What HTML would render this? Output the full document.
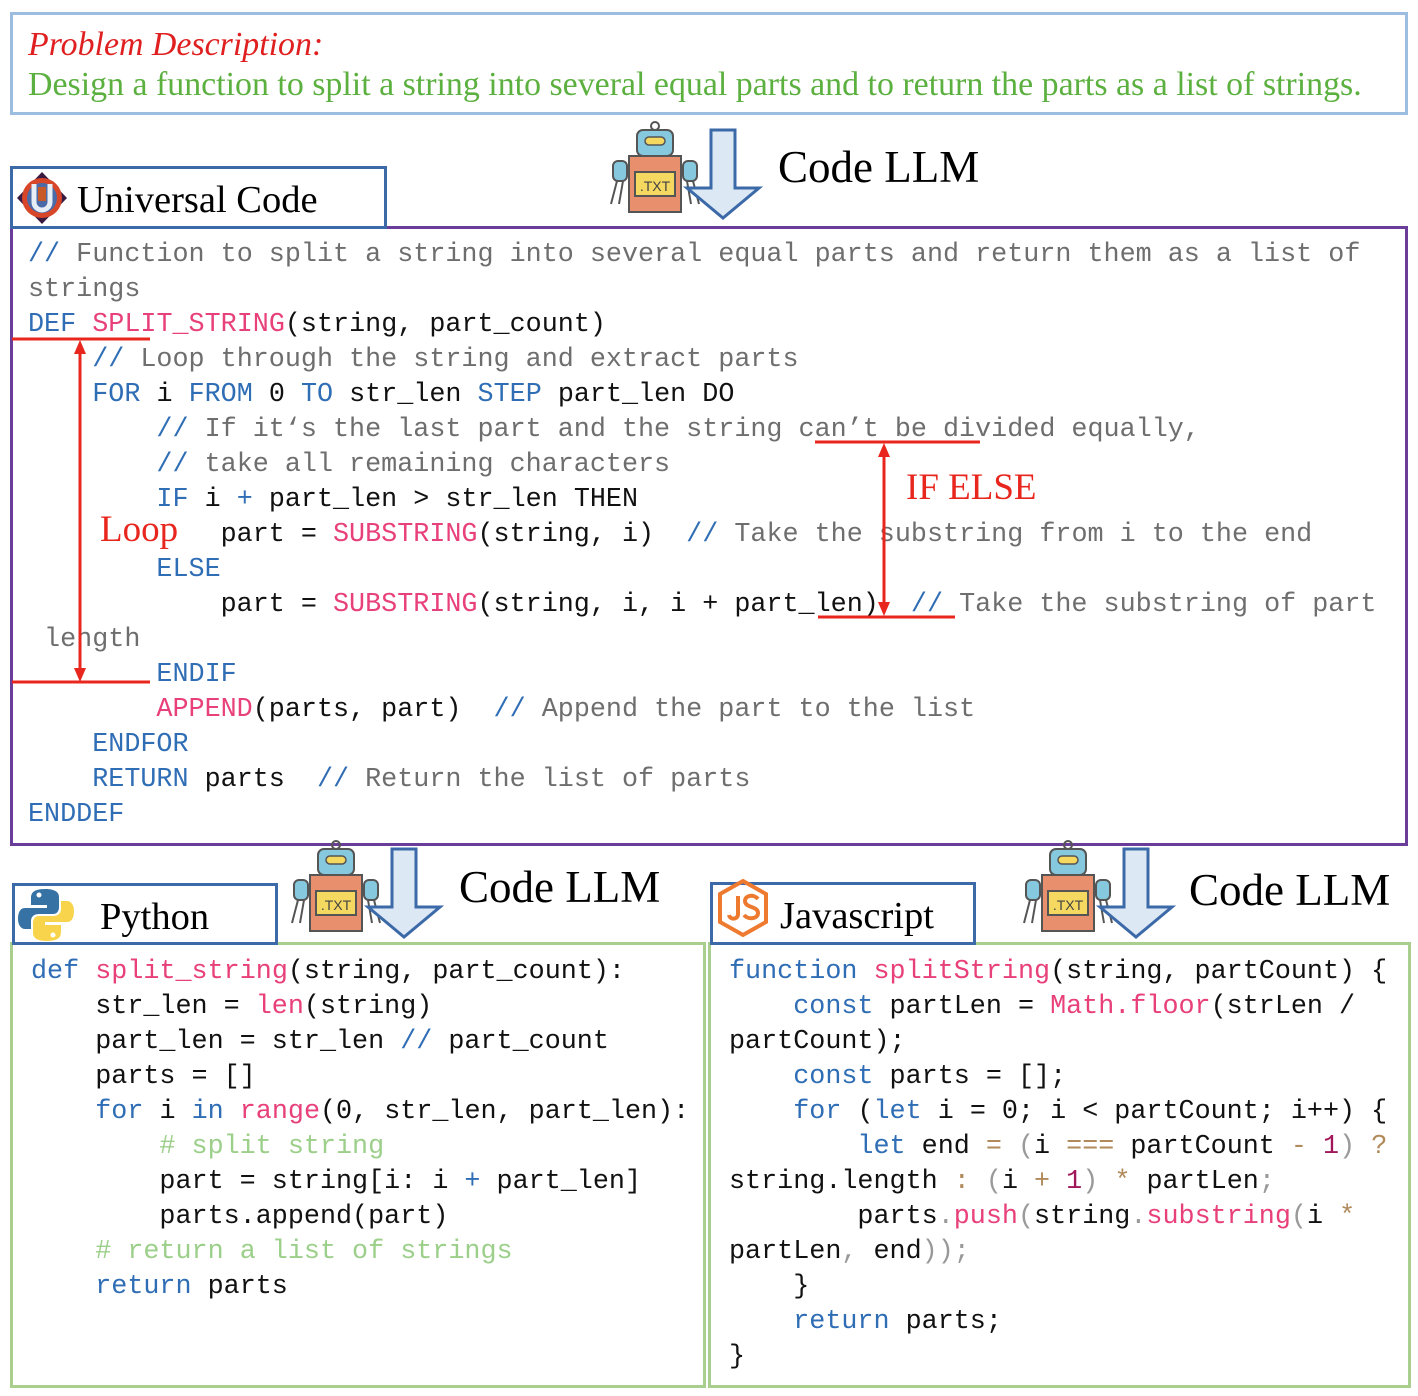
<!DOCTYPE html>
<html><head><meta charset="utf-8"><style>
body{margin:0;width:1418px;height:1396px;background:#fff;position:relative;overflow:hidden;font-family:"Liberation Serif",serif}
.a{position:absolute;box-sizing:border-box}
pre{position:absolute;margin:0;font-family:"Liberation Mono",monospace;font-size:26.75px;line-height:35px;color:#111}
.k{color:#2f6db5}.f{color:#e8407a}.c{color:#6e6e6e}.g{color:#9ccf8a}.n{color:#a0185a}.o{color:#b08a5a}.p{color:#999}
.t{position:absolute;white-space:nowrap}
</style></head><body>
<div class="a" style="left:10px;top:12px;width:1398px;height:103px;border:3px solid #9dbde0"></div>
<div class="t" style="left:28px;top:26px;font-size:33.9px;color:#e02020;font-style:italic">Problem Description:</div>
<div class="t" style="left:28px;top:66px;font-size:33.9px;color:#5cb040">Design a function to split a string into several equal parts and to return the parts as a list of strings.</div>

<div class="a" style="left:10px;top:226px;width:1398px;height:620px;border:3px solid #6a3d9a"></div>
<div class="a" style="left:10px;top:166px;width:377px;height:63px;border:3px solid #3c6aa8;background:#fff"></div>
<svg class="a" style="left:16px;top:171px" width="52" height="54" viewBox="0 0 52 54"><polygon points="26,1 51,27 26,53 1,27" fill="#3a1a40"/><circle cx="26" cy="27" r="20" fill="#d8462a"/><circle cx="26" cy="27" r="15" fill="#4a6aa8"/><path d="M18,13 V31 A8,8 0 0 0 34,31 V13" fill="none" stroke="#e8eef5" stroke-width="5"/><rect x="22" y="16" width="8" height="14" fill="#c85a2a"/></svg>
<div class="t" style="left:77px;top:178px;font-size:38.5px">Universal Code</div>

<pre style="left:28px;top:238px"><span class="k">//</span><span class="c"> Function to split a string into several equal parts and return them as a list of
strings</span>
<span class="k">DEF</span> <span class="f">SPLIT_STRING</span>(string, part_count)
    <span class="k">//</span><span class="c"> Loop through the string and extract parts</span>
    <span class="k">FOR</span> i <span class="k">FROM</span> 0 <span class="k">TO</span> str_len <span class="k">STEP</span> part_len DO
        <span class="k">//</span><span class="c"> If it‘s the last part and the string can’t be divided equally,</span>
        <span class="k">//</span><span class="c"> take all remaining characters</span>
        <span class="k">IF</span> i <span class="k">+</span> part_len &gt; str_len THEN
            part = <span class="f">SUBSTRING</span>(string, i)  <span class="k">//</span><span class="c"> Take the substring from i to the end</span>
        <span class="k">ELSE</span>
            part = <span class="f">SUBSTRING</span>(string, i, i + part_len)  <span class="k">//</span><span class="c"> Take the substring of part
 length</span>
        <span class="k">ENDIF</span>
        <span class="f">APPEND</span>(parts, part)  <span class="k">//</span><span class="c"> Append the part to the list</span>
    <span class="k">ENDFOR</span>
    <span class="k">RETURN</span> parts  <span class="k">//</span><span class="c"> Return the list of parts</span>
<span class="k">ENDDEF</span></pre>

<svg class="a" style="left:0;top:0" width="1418" height="1396">
<g stroke="#e8261e" stroke-width="3" fill="#e8261e">
<line x1="12" y1="339" x2="150" y2="339"/><line x1="12" y1="682" x2="150" y2="682"/>
<line x1="80" y1="350" x2="80" y2="672"/><polygon points="80,340 74,354 86,354" stroke="none"/><polygon points="80,682 74,668 86,668" stroke="none"/>
<line x1="815" y1="442" x2="980" y2="442"/><line x1="818" y1="617" x2="955" y2="617"/>
<line x1="884" y1="452" x2="884" y2="607"/><polygon points="884,443 878,457 890,457" stroke="none"/><polygon points="884,616 878,602 890,602" stroke="none"/>
</g></svg>
<div class="t" style="left:100px;top:508px;font-size:37px;color:#e8261e">Loop</div>
<div class="t" style="left:906px;top:466px;font-size:37px;color:#e8261e">IF ELSE</div>

<svg class="a" style="left:605px;top:116px" width="160" height="104" viewBox="0 0 160 104"><g id="r"><circle cx="50" cy="10" r="4" fill="none" stroke="#555" stroke-width="2"/><rect x="32" y="14" width="36" height="26" rx="6" fill="#86c8de" stroke="#555" stroke-width="2"/><rect x="40" y="21" width="20" height="8" rx="4" fill="#f5d860" stroke="#555" stroke-width="1.5"/><rect x="8" y="45" width="14" height="20" rx="5" fill="#86c8de" stroke="#555" stroke-width="2"/><rect x="78" y="45" width="14" height="20" rx="5" fill="#86c8de" stroke="#555" stroke-width="2"/><path d="M12 65 L6 88 M18 65 L14 88 M82 65 L86 88 M88 65 L94 88" stroke="#555" stroke-width="2"/><rect x="24" y="40" width="52" height="56" fill="#e8906e" stroke="#555" stroke-width="2"/><rect x="30" y="56" width="40" height="24" fill="#f5d860" stroke="#555" stroke-width="2"/><text x="50" y="75" font-family="Liberation Sans" font-size="14" text-anchor="middle" fill="#444">.TXT</text></g><polygon points="106,14 130,14 130,72 154,72 118,102 82,72 106,72" fill="#dde8f5" stroke="#3c6aa8" stroke-width="3"/></svg>
<div class="t" style="left:778px;top:141px;font-size:45px">Code LLM</div>

<svg class="a" style="left:286px;top:834px" width="160" height="106" viewBox="0 0 160 104"><use href="#r"/><polygon points="106,14 130,14 130,72 154,72 118,102 82,72 106,72" fill="#dde8f5" stroke="#3c6aa8" stroke-width="3"/></svg>
<svg class="a" style="left:1018px;top:834px" width="160" height="106" viewBox="0 0 160 104"><use href="#r"/><polygon points="106,14 130,14 130,72 154,72 118,102 82,72 106,72" fill="#dde8f5" stroke="#3c6aa8" stroke-width="3"/></svg>
<div class="t" style="left:459px;top:861px;font-size:45px">Code LLM</div>
<div class="t" style="left:1189px;top:864px;font-size:45px">Code LLM</div>

<div class="a" style="left:10px;top:942px;width:696px;height:446px;border:3px solid #a9cf8e"></div>
<div class="a" style="left:12px;top:883px;width:266px;height:62px;border:3px solid #3c6aa8;background:#fff"></div>
<svg class="a" style="left:17px;top:887px" width="58" height="56" viewBox="0 0 58 56"><path d="M28 2 C14 2 14 8 14 12 V18 H30 V21 H8 C2 21 1 28 1 32 C1 38 4 42 8 42 H14 V34 C14 29 18 27 22 27 H36 C40 27 42 24 42 20 V10 C42 4 36 2 28 2Z" fill="#3772a4"/><path d="M30 54 C44 54 44 48 44 44 V38 H28 V35 H50 C56 35 57 28 57 24 C57 18 54 14 50 14 H44 V22 C44 27 40 29 36 29 H22 C18 29 16 32 16 36 V46 C16 52 22 54 30 54Z" fill="#f7d44c"/><circle cx="22" cy="8" r="2.5" fill="#fff"/><circle cx="36" cy="48" r="2.5" fill="#fff"/></svg>
<div class="t" style="left:100px;top:895px;font-size:38.5px">Python</div>
<pre style="left:31px;top:955px"><span class="k">def</span> <span class="f">split_string</span>(string, part_count):
    str_len = <span class="f">len</span>(string)
    part_len = str_len <span class="k">//</span> part_count
    parts = []
    <span class="k">for</span> i <span class="k">in</span> <span class="f">range</span>(0, str_len, part_len):
        <span class="g"># split string</span>
        part = string[i: i <span class="k">+</span> part_len]
        parts.append(part)
    <span class="g"># return a list of strings</span>
    <span class="k">return</span> parts</pre>

<div class="a" style="left:708px;top:942px;width:703px;height:446px;border:3px solid #a9cf8e"></div>
<div class="a" style="left:710px;top:882px;width:266px;height:63px;border:3px solid #3c6aa8;background:#fff"></div>
<svg class="a" style="left:716px;top:878px" width="54" height="60" viewBox="0 0 54 60"><polygon points="27,3 50,16 50,44 27,57 4,44 4,16" fill="none" stroke="#ee7a30" stroke-width="4"/><path d="M22 18 V36 C22 42 14 42 13 37" fill="none" stroke="#ee7a30" stroke-width="4"/><path d="M42 21 C38 16 29 17 29 23 C29 30 42 28 42 35 C42 41 32 42 28 37" fill="none" stroke="#ee7a30" stroke-width="4"/></svg>
<div class="t" style="left:780px;top:894px;font-size:38.5px">Javascript</div>
<pre style="left:729px;top:955px"><span class="k">function</span> <span class="f">splitString</span>(string, partCount) {
    <span class="k">const</span> partLen = <span class="f">Math.floor</span>(strLen /
partCount);
    <span class="k">const</span> parts = [];
    <span class="k">for</span> (<span class="k">let</span> i = 0; i &lt; partCount; i++) {
        <span class="k">let</span> end <span class="o">=</span> <span class="p">(</span>i <span class="o">===</span> partCount <span class="o">-</span> <span class="n">1</span><span class="p">)</span> <span class="o">?</span>
string.length <span class="o">:</span> <span class="p">(</span>i <span class="o">+</span> <span class="n">1</span><span class="p">)</span> <span class="o">*</span> partLen<span class="p">;</span>
        parts<span class="p">.</span><span class="f">push</span><span class="p">(</span>string<span class="p">.</span><span class="f">substring</span><span class="p">(</span>i <span class="o">*</span>
partLen<span class="p">,</span> end<span class="p">));</span>
    }
    <span class="k">return</span> parts;
}</pre>
</body></html>
